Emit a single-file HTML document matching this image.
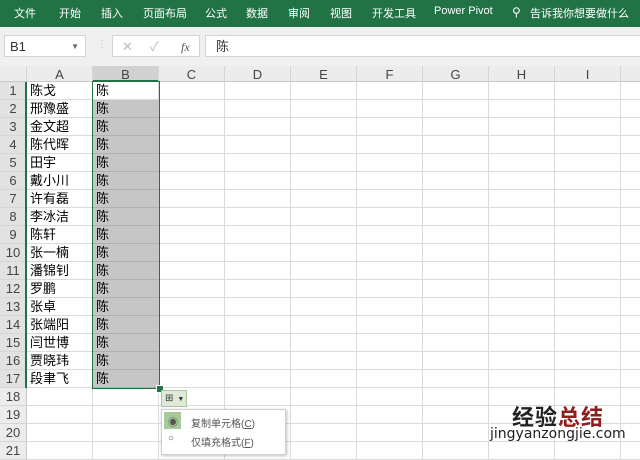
<!DOCTYPE html><html><head><meta charset="utf-8"><style>
body{margin:0;width:640px;height:451px;overflow:hidden;position:relative;background:#fff;font-family:"Liberation Sans","Noto Sans CJK SC",sans-serif;}
.rib{position:absolute;left:0;top:0;width:640px;height:27px;background:#217346;color:#fff;font-size:11px;}
.rib span{position:absolute;top:5px}
.fb{position:absolute;top:27px;left:0;width:640px;height:39px;background:#f0f0f0;}
.box{position:absolute;background:#fff;border:1px solid #d4d4d4;}
.ch{position:absolute;top:66px;height:16px;background:#ececec;border-bottom:1px solid #c8c8c8;font-size:13px;color:#444;text-align:center;line-height:17px;box-sizing:border-box;border-right:1px solid #d6d6d6}
.rh{position:absolute;left:0;width:27px;height:18px;background:#ececec;border-bottom:1px solid #d6d6d6;border-right:1px solid #c8c8c8;box-sizing:border-box;font-size:13px;color:#444;text-align:center;line-height:18px}
.c{position:absolute;height:18px;font-size:13px;line-height:18px;padding-left:3px;box-sizing:border-box;color:#000}
</style></head><body>
<div class="rib">
<span style="left:14px">文件</span><span style="left:59px">开始</span><span style="left:101px">插入</span><span style="left:143px">页面布局</span><span style="left:205px">公式</span><span style="left:246px">数据</span><span style="left:288px">审阅</span><span style="left:330px">视图</span><span style="left:372px">开发工具</span><span style="left:434px">Power Pivot</span>
<span style="left:512px;font-size:12px">⚲</span><span style="left:530px">告诉我你想要做什么</span></div>
<div class="fb">
<div class="box" style="left:4px;top:8px;width:82px;height:22px;font-size:13px;line-height:22px;padding-left:5px;box-sizing:border-box;color:#333">B1<span style="position:absolute;right:6px;font-size:8px;color:#666">▼</span></div>
<span style="position:absolute;left:97px;top:12px;color:#bbb;font-size:10px">⋮</span>
<div class="box" style="left:112px;top:8px;width:88px;height:22px;box-sizing:border-box;color:#bbb;font-size:13px;line-height:22px"><span style="position:absolute;left:9px">✕</span><span style="position:absolute;left:37px">✓</span><span style="position:absolute;left:68px;font-family:'Liberation Serif';font-style:italic;color:#555;font-size:12px">fx</span></div>
<div class="box" style="left:205px;top:8px;width:440px;height:22px;box-sizing:border-box;font-size:13px;line-height:22px;padding-left:10px;color:#333">陈</div>
</div>
<div class="ch" style="left:0;width:27px"></div>
<div id="g"></div>
<div style="position:absolute;left:161px;top:390px;width:26px;height:17px;background:#dfe9d8;border:1px solid #a9c79a;box-sizing:border-box;font-size:10px;line-height:15px;padding-left:3px;color:#333">⊞<span style="font-size:7px;margin-left:4px">▼</span></div>
<div style="position:absolute;left:161px;top:409px;width:123px;height:44px;background:#fff;border:1px solid #d0d0d0;box-shadow:1px 1px 3px rgba(0,0,0,.25);font-size:10px;color:#555">
<div style="position:absolute;left:2px;top:2px;width:17px;height:17px;background:#a8c99a"></div>
<span style="position:absolute;left:6px;top:4px;font-size:10px">◉</span><span style="position:absolute;left:29px;top:5px">复制单元格(<u>C</u>)</span>
<span style="position:absolute;left:6px;top:23px;font-size:10px">○</span><span style="position:absolute;left:29px;top:24px">仅填充格式(<u>F</u>)</span></div>
<div style="position:absolute;left:512px;top:400px;font-size:22px;font-weight:bold;letter-spacing:1px"><span style="color:#222">经验</span><span style="color:#8e1f1f">总结</span></div>
<div style="position:absolute;left:490px;top:426px;font-size:14px;color:#222;font-family:'DejaVu Sans',sans-serif">jingyanzongjie.com</div>
<script>
var g=document.getElementById('g'),h='';
var cols='ABCDEFGHI'.split(''),x=27;
var A=['陈戈','邢豫盛','金文超','陈代晖','田宇','戴小川','许有磊','李冰洁','陈轩','张一楠','潘锦钊','罗鹏','张卓','张端阳','闫世博','贾晓玮','段聿飞'];
for(var i=0;i<10;i++){var w=66;var lbl=cols[i]||'';h+='<div class="ch" style="left:'+x+'px;width:'+w+'px;'+(i==1?'background:#d2d2d2;border-bottom:2px solid #217346;':'')+'">'+lbl+'</div>';
for(var r=0;r<21;r++)h+='<div style="position:absolute;left:'+x+'px;top:'+(82+r*18)+'px;width:'+w+'px;height:18px;border-right:1px solid #dadada;border-bottom:1px solid #dadada;box-sizing:border-box"></div>';x+=w;}
for(var r=0;r<21;r++){var y=82+r*18;h+='<div class="rh" style="top:'+y+'px;'+(r<17?'background:#e2e2e2':'')+'">'+(r+1)+'</div>';
if(r<17){h+='<div class="c" style="left:27px;top:'+y+'px">'+A[r]+'</div>';h+='<div class="c" style="left:93px;top:'+y+'px;width:66px;'+(r>0?'background:#c6c6c6;border-bottom:1px solid #b0b0b0;':'')+'">陈</div>';}}
h+='<div style="position:absolute;left:25px;top:82px;width:2px;height:306px;background:#217346"></div>';
h+='<div style="position:absolute;left:92px;top:81px;width:68px;height:308px;border:1.5px solid #217346;box-sizing:border-box"></div>';
h+='<div style="position:absolute;left:156px;top:385px;width:6px;height:6px;background:#217346;border:1px solid #fff"></div>';
g.innerHTML=h;
</script>
</body></html>
